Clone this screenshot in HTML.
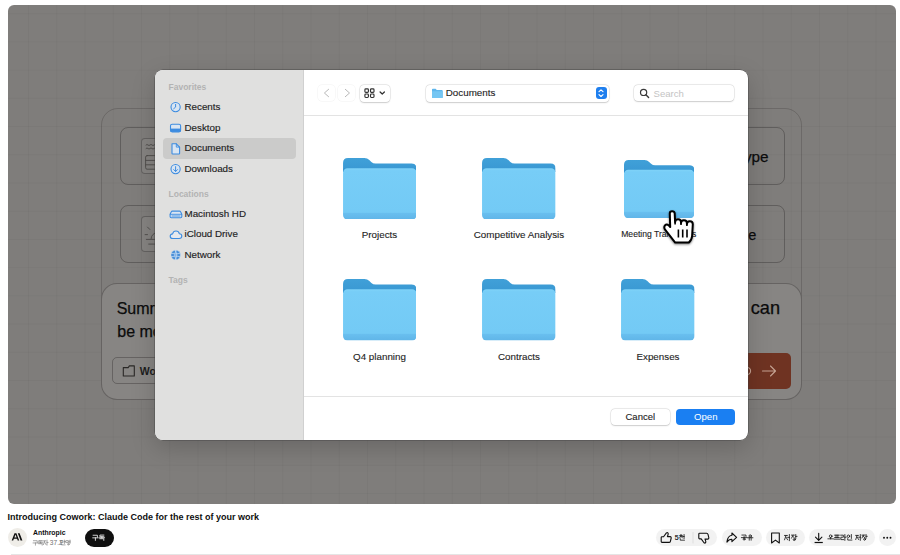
<!DOCTYPE html>
<html><head><meta charset="utf-8">
<style>
*{box-sizing:border-box;margin:0;padding:0}
html,body{width:900px;height:555px;overflow:hidden;background:#fff;font-family:"Liberation Sans",sans-serif}
.a{position:absolute}
#video{left:8px;top:5px;width:888px;height:499px;border-radius:6px;overflow:hidden;background:#7f7d7b}
.grid{left:0;top:0;width:888px;height:499px;
 background-image:linear-gradient(to right, rgba(0,0,0,0.03) 1px, transparent 1px),linear-gradient(to bottom, rgba(0,0,0,0.03) 1px, transparent 1px);
 background-size:28.25px 28.22px;background-position:20px 8.2px}
.bl{border:1px solid rgba(40,38,36,0.35)}
.t{white-space:nowrap;color:#222}
#dlg{left:147px;top:64.5px;width:593px;height:370px;border-radius:8px;overflow:hidden;background:#fff;box-shadow:0 0 0 0.5px rgba(0,0,0,0.55),0 0 0 1px rgba(255,255,255,0.12),0 8px 24px rgba(0,0,0,0.18)}
#side{left:0;top:0;width:149px;height:370px;background:#e0e0df;border-right:0.5px solid #d0d0d0}
.sh{font-size:8.5px;font-weight:700;color:#b3b3b3}
.si{font-size:9.8px;color:#1e1e1e;-webkit-text-stroke:0.15px #1e1e1e}
.btn{background:#fff;border-radius:4px;box-shadow:0 0 0 0.5px rgba(0,0,0,0.12),0 0.5px 1.5px rgba(0,0,0,0.15)}
.fl{font-size:9.8px;color:#1e1e1e;-webkit-text-stroke:0.12px #1e1e1e;text-align:center;white-space:nowrap}
.pill{background:#f2f2f2;border-radius:9px;height:17px;top:529px}
.kt{font-size:6.5px;color:#0f0f0f;font-weight:700;white-space:nowrap}
</style></head><body>
<svg width="0" height="0" style="position:absolute">
<defs>
<linearGradient id="fg" x1="0" y1="0" x2="0" y2="1">
<stop offset="0" stop-color="#80d3f8"/><stop offset="0.05" stop-color="#77cdf7"/><stop offset="0.86" stop-color="#73caf5"/><stop offset="0.87" stop-color="#69bfef"/><stop offset="1" stop-color="#60b5e8"/>
</linearGradient>
<linearGradient id="bg" x1="0" y1="0" x2="0" y2="1">
<stop offset="0" stop-color="#40a0d8"/><stop offset="0.7" stop-color="#3b9ad4"/><stop offset="1" stop-color="#2687c6"/>
</linearGradient>
<symbol id="folder" viewBox="0 0 74 62">
<path d="M0,5 Q0,0 5,0 H21.5 Q24.5,0 26.5,2 L28.5,4 Q30.2,5.6 32.8,5.6 H69 Q74,5.6 74,10.5 V14 H0 Z" fill="url(#bg)"/>
<rect x="0" y="10.3" width="74" height="51.7" rx="4.5" fill="url(#fg)"/>
</symbol>
</defs></svg>
<div id="video" class="a">
  <div class="a grid"></div>
  <!-- background app -->
  <div class="a" style="left:93.3px;top:102.6px;width:701.1px;height:240px;border-radius:17px;border:1px solid rgba(40,38,36,0.22)"></div>
  <div class="a bl" style="left:112px;top:122px;width:664.7px;height:58px;border-radius:8px"></div>
  <div class="a bl" style="left:112px;top:200px;width:664.7px;height:58px;border-radius:8px"></div>
  <div class="a bl" style="left:132.9px;top:133.3px;width:36px;height:35.3px;border-radius:4px;background:#858381"></div>
  <div class="a bl" style="left:132.9px;top:211.3px;width:36px;height:35.9px;border-radius:4px;background:#858381"></div>
  <svg class="a" style="left:132px;top:133px" width="20" height="120" fill="none" stroke="#4e4c4a" stroke-width="0.9" stroke-linecap="round">
    <path d="M6,7 q1,-1.1 2,0 t2,0 t2,0 t2,0 t2,0 M6,10.5 q1,-1.1 2,0 t2,0 t2,0 t2,0 t2,0"/>
    <rect x="5.6" y="17.6" width="14" height="13.6" rx="1.5"/>
    <path d="M5.6,22.4 H19 M5.6,26.8 H19"/>
    <path d="M7.5,89.1 L9.9,91.5 M5.1,96.6 H7.5 M6.3,101.4 H20 M8.7,106.1 H20"/>
    <path d="M11.1,100.6 A6,6 0 0 1 17.1,94.6"/>
  </svg>
  <div class="a bl" style="left:92.8px;top:278.4px;width:701.6px;height:116.6px;border-radius:16px;background:#878583"></div>
  <div class="a t" style="left:108.7px;top:296px;font-size:16px;line-height:16px;color:#0c0c0c;-webkit-text-stroke:0.25px #0c0c0c">Summarize my notes</div>
  <div class="a t" style="left:109.3px;top:318.5px;font-size:16px;line-height:16px;color:#0c0c0c;-webkit-text-stroke:0.25px #0c0c0c">be more useful</div>
  <div class="a t" style="right:116px;top:294.6px;font-size:18.2px;line-height:16px;color:#0c0c0c;-webkit-text-stroke:0.25px #0c0c0c">so you can</div>
  <div class="a bl" style="left:104.3px;top:351.6px;width:100px;height:27.4px;border-radius:5px"></div>
  <svg class="a" style="left:112px;top:358.6px" width="16" height="14" fill="none" stroke="#2a2826" stroke-width="1.1" stroke-linejoin="round">
    <path d="M3.3,3.6 H8.2 L9.4,1.9 H14.3 V12 H3.3 Z"/>
  </svg>
  <div class="a t" style="left:131.8px;top:361.3px;font-size:10.5px;line-height:10.5px;font-weight:700;color:#1c1c1c">Work in a folder</div>
  <div class="a" style="left:713px;top:348.1px;width:70px;height:36.1px;border-radius:5px;background:#6f3322"></div>
  <svg class="a" style="left:735px;top:358px" width="40" height="18" fill="none" stroke="#c5a292" stroke-width="1.1" stroke-linecap="round" stroke-linejoin="round">
    <circle cx="4" cy="8" r="3.6"/>
    <path d="M19.5,8 H32.5 M27.5,3 L32.5,8 L27.5,13"/>
  </svg>
  <div class="a t" style="right:127.4px;top:144.3px;font-size:15.3px;line-height:15.3px;color:#0c0c0c;-webkit-text-stroke:0.25px #0c0c0c">Create a prototype</div>
  <div class="a t" style="right:139.6px;top:223.3px;font-size:14.5px;line-height:14.5px;color:#0c0c0c;-webkit-text-stroke:0.25px #0c0c0c">Organize a file</div>

  <!-- dialog -->
  <div id="dlg" class="a">
    <div id="side" class="a">
      <div class="a sh" style="left:13.5px;top:12.8px">Favorites</div>
      <div class="a" style="left:7.5px;top:68.5px;width:133px;height:20.5px;border-radius:4px;background:#cbcbca"></div>
      <svg class="a" style="left:0;top:0" width="149" height="370" fill="none" stroke="#3d8ce0" stroke-width="1.1" stroke-linecap="round" stroke-linejoin="round">
        <circle cx="20.6" cy="37.1" r="4.6" fill="#d9e5f2"/>
        <path d="M20.6,34.4 V37.1 L18.7,38.7" stroke-width="1"/>
        <rect x="15.5" y="54.2" width="10.1" height="7.7" rx="1.6" fill="#d9e5f2"/>
        <rect x="15.5" y="58.6" width="10.1" height="3.3" fill="#3d8ce0" stroke="none"/>
        <path d="M17,73.8 H21.3 L24.6,77.1 V83.4 Q24.6,84 24,84 H17.6 Q17,84 17,83.4 Z" fill="#d9e5f2"/>
        <path d="M21.3,73.8 V77.1 H24.6" stroke-width="0.9"/>
        <circle cx="20.6" cy="99.1" r="4.6" fill="#d9e5f2"/>
        <path d="M20.6,96.6 V101.4 M18.7,99.6 L20.6,101.5 L22.5,99.6" stroke-width="1"/>
        <path d="M17.4,141.1 H24.5 Q25.3,141.1 25.6,141.8 L26.8,144.3 V146.6 Q26.8,147.7 25.7,147.7 H16.2 Q15.1,147.7 15.1,146.6 V144.3 L16.3,141.8 Q16.6,141.1 17.4,141.1 Z" fill="#d9e5f2"/>
        <path d="M15.3,144.3 H26.6 M17,146 H25" stroke-width="0.9"/>
        <path d="M17.8,168.5 H24.2 Q26.8,168.5 26.8,166.1 Q26.8,163.9 24.4,163.8 Q23.7,161 21,161 Q18.2,161 17.6,163.9 Q15.2,164.2 15.2,166.2 Q15.2,168.5 17.8,168.5 Z" fill="#e6e9ee"/>
        <circle cx="20.75" cy="185" r="4.8" fill="#4a8fd8" stroke="#cfe0f2" stroke-width="0.4"/>
        <path d="M16.3,183.3 Q20.7,184.8 25.2,183.3 M16.3,186.7 Q20.7,185.2 25.2,186.7 M20.75,180.4 Q18.5,185 20.75,189.6 M20.75,180.4 Q23,185 20.75,189.6" stroke="#cfe2f7" stroke-width="0.7"/>
      </svg>
      <div class="a si" style="left:29.5px;top:31.1px">Recents</div>
      <div class="a si" style="left:29.5px;top:52.1px">Desktop</div>
      <div class="a si" style="left:29.5px;top:72.8px">Documents</div>
      <div class="a si" style="left:29.5px;top:93.3px">Downloads</div>
      <div class="a sh" style="left:13.5px;top:119.4px">Locations</div>
      <div class="a si" style="left:29.5px;top:138px">Macintosh HD</div>
      <div class="a si" style="left:29.5px;top:158.7px">iCloud Drive</div>
      <div class="a si" style="left:29.5px;top:179.7px">Network</div>
      <div class="a sh" style="left:13.5px;top:205.3px">Tags</div>
    </div>
    <div class="a" style="left:149px;top:45px;width:444px;height:0.5px;background:#e3e3e3"></div>
    <div class="a" style="left:149px;top:326.5px;width:444px;height:0.5px;background:#e3e3e3"></div>
    <!-- toolbar -->
    <div class="a btn" style="left:163px;top:15px;width:17px;height:16.5px;box-shadow:0 0 0 0.5px rgba(0,0,0,0.06)"></div>
    <div class="a btn" style="left:183px;top:15px;width:17px;height:16.5px;box-shadow:0 0 0 0.5px rgba(0,0,0,0.06)"></div>
    <div class="a btn" style="left:204.5px;top:15.5px;width:30.5px;height:16.5px"></div>
    <div class="a btn" style="left:271px;top:15px;width:183px;height:17px"></div>
    <div class="a" style="left:440.5px;top:17.5px;width:11px;height:11.5px;border-radius:3px;background:#1f7fee"></div>
    <div class="a t" style="left:290.8px;top:17.9px;font-size:9.8px;color:#1e1e1e;-webkit-text-stroke:0.12px #1e1e1e">Documents</div>
    <div class="a btn" style="left:478.5px;top:15px;width:100px;height:16.5px"></div>
    <div class="a t" style="left:498.5px;top:18px;font-size:9.6px;color:#c4c4c4">Search</div>
    <svg class="a" style="left:0;top:0" width="593" height="60" fill="none" stroke-linecap="round" stroke-linejoin="round">
      <path d="M173.6,19.3 L169.4,23 L173.6,26.7" stroke="#b9b9b9" stroke-width="1"/>
      <path d="M190.3,19.3 L194.5,23 L190.3,26.7" stroke="#b9b9b9" stroke-width="1"/>
      <g stroke="#333" stroke-width="1.15">
        <rect x="209.9" y="18.9" width="3.5" height="3.5" rx="0.9"/>
        <rect x="215.5" y="18.9" width="3.5" height="3.5" rx="0.9"/>
        <rect x="209.9" y="24" width="3.5" height="3.5" rx="0.9"/>
        <rect x="215.5" y="24" width="3.5" height="3.5" rx="0.9"/>
        <path d="M225.1,22 L227.25,24 L229.4,22" stroke-width="1.25"/>
      </g>
      <path d="M277,19.6 Q277,18.7 277.9,18.7 H280.6 L281.8,19.9 H286.8 Q287.7,19.9 287.7,20.8 V27.2 Q287.7,28.1 286.8,28.1 H277.9 Q277,28.1 277,27.2 Z" fill="#5fb6ec" stroke="none"/>
      <path d="M277,21.2 H287.7 V27.2 Q287.7,28.1 286.8,28.1 H277.9 Q277,28.1 277,27.2 Z" fill="#75c6f3" stroke="none"/>
      <path d="M444,21.7 L446,19.8 L448,21.7 M444,24.6 L446,26.5 L448,24.6" stroke="#fff" stroke-width="1.15"/>
      <circle cx="488.6" cy="22.4" r="3.1" stroke="#3a3a3a" stroke-width="1.2"/>
      <path d="M490.9,24.7 L493.6,27.4" stroke="#3a3a3a" stroke-width="1.4"/>
    </svg>
    <!-- folders -->
    <svg class="a" style="left:187.7px;top:88.2px" width="73.6" height="61.6"><use href="#folder"/></svg>
    <svg class="a" style="left:327.2px;top:88.2px" width="73.6" height="61.6"><use href="#folder"/></svg>
    <svg class="a" style="left:468.5px;top:90.2px" width="70.3" height="58.2" viewBox="0 0 74 62" preserveAspectRatio="none"><use href="#folder"/></svg>
    <svg class="a" style="left:187.7px;top:209.9px" width="73.6" height="61.6"><use href="#folder"/></svg>
    <svg class="a" style="left:327.2px;top:209.9px" width="73.6" height="61.6"><use href="#folder"/></svg>
    <svg class="a" style="left:466.2px;top:209.9px" width="73.6" height="61.6"><use href="#folder"/></svg>
    <div class="a fl" style="left:174.5px;top:159.4px;width:100px">Projects</div>
    <div class="a fl" style="left:314px;top:159.4px;width:100px">Competitive Analysis</div>
    <div class="a fl" style="left:453.7px;top:159.3px;width:100px;font-size:8.6px">Meeting Transcripts</div>
    <div class="a fl" style="left:174.5px;top:281.2px;width:100px">Q4 planning</div>
    <div class="a fl" style="left:314px;top:281.2px;width:100px">Contracts</div>
    <div class="a fl" style="left:453px;top:281.2px;width:100px">Expenses</div>
    <!-- buttons -->
    <div class="a btn" style="left:456px;top:339.2px;width:58.8px;height:16.6px"></div>
    <div class="a t" style="left:470.5px;top:341.8px;font-size:9.5px;color:#1e1e1e;-webkit-text-stroke:0.12px #1e1e1e">Cancel</div>
    <div class="a" style="left:521px;top:339px;width:59px;height:16.5px;border-radius:4px;background:#1a7ff2"></div>
    <div class="a t" style="left:539px;top:341.5px;font-size:9.6px;color:#fff">Open</div>
  </div>
</div>

<!-- youtube info -->
<div class="a t" style="left:7.5px;top:511.7px;font-size:9px;font-weight:700;color:#0f0f0f">Introducing Cowork: Claude Code for the rest of your work</div>
<div class="a" style="left:8px;top:527.5px;width:19px;height:19px;border-radius:50%;background:#efede8"></div>
<div class="a t" style="left:33px;top:528.8px;font-size:6.9px;font-weight:700;color:#0f0f0f">Anthropic</div>
<svg class="a" style="left:0;top:0" width="900" height="555"><g fill="none" stroke="#707070" stroke-width="1.224" stroke-linecap="square"><g transform="translate(33.00,540.20) scale(0.4900)"><path d="M1,1 H8.6 V4.2 M0.3,5.6 H9.7 M5,5.6 V10"/></g><g transform="translate(38.10,540.20) scale(0.4900)"><path d="M8.4,0.7 H1.4 V3.6 H8.4 M5,3.8 V5.5 M0.3,5.5 H9.7 M1.4,7.2 H8.4 V10"/></g><g transform="translate(43.20,540.20) scale(0.4900)"><path d="M0.6,1.4 H5.2 M3,1.6 L0.6,8.8 M3,4.2 L5.6,8.8 M7.8,0 V10 M7.8,4.6 H9.8"/></g></g><g fill="none" stroke="#707070" stroke-width="1.224" stroke-linecap="square"><g transform="translate(60.60,540.20) scale(0.4900)"><path d="M0.8,0.8 H5 V5 H0.8 Z M7.8,0 V6.6 M7.8,3 H9.8 M1.8,7.2 V9.6 H9"/></g><g transform="translate(65.90,540.20) scale(0.4900)"><path d="M0.8,0.8 H4.6 V4.8 H0.8 Z M8.4,0 V6.2 M5.6,1.8 H8.4 M5.6,4 H8.4"/><circle cx="5.0" cy="8.3" r="1.6"/></g></g></svg><div class="a t" style="left:49.8px;top:539.3px;font-size:6.6px;line-height:7px;color:#707070">37.2</div>
<div class="a" style="left:85px;top:529px;width:28.5px;height:17.5px;border-radius:9px;background:#0f0f0f"></div>
<div class="a pill" style="left:656px;width:61px"></div>
<div class="a pill" style="left:722px;width:39.5px"></div>
<div class="a pill" style="left:765.5px;width:39px"></div>
<div class="a pill" style="left:809px;width:65.5px"></div>
<div class="a pill" style="left:879px;width:16.5px;border-radius:50%;height:16.5px"></div>
<div class="a" style="left:11px;top:553.5px;width:889px;height:1px;background:#e5e5e5"></div>
<svg class="a" style="left:0;top:500px" width="900" height="55" fill="none" stroke="#0f0f0f" stroke-linejoin="round" stroke-linecap="round">
  <path d="M14.5,33.2 H16.4 L19.2,40.4 H17.7 L17.1,38.7 H13.9 L13.2,40.4 H11.7 Z M14.4,37.5 H16.6 L15.5,34.6 Z" fill="#0f0f0f" stroke="none" fill-rule="evenodd"/>
  <path d="M17.8,33.2 H19.6 L22.4,40.4 H20.6 Z" fill="#0f0f0f" stroke="none"/>
  <path d="M661.2,37.6 Q661.2,36.8 662,36.8 H663.6 L666.4,32.9 Q667.4,32.2 668,33 Q668.4,33.6 668.1,34.5 L667.4,36.6 H670.3 Q671.4,36.8 671.2,38 L670.4,41.3 Q670.1,42.4 669,42.4 H662 Q661.2,42.4 661.2,41.6 Z" stroke-width="1.1"/>
  <path d="M693,32.5 V43" stroke="#d0d0d0" stroke-width="0.6"/>
  <path d="M 698.80,38.10 Q 698.80,38.90 699.60,38.90 H 701.20 L 704.00,42.80 Q 705.00,43.50 705.60,42.70 Q 706.00,42.10 705.70,41.20 L 705.00,39.10 H 707.90 Q 709.00,38.90 708.80,37.70 L 708.00,34.40 Q 707.70,33.30 706.60,33.30 H 699.60 Q 698.80,33.30 698.80,34.10 Z" stroke-width="1.1"/>
  <path d="M731.9,33 L736.6,37.3 L731.9,41.6 V39.3 Q728.6,39.2 726.9,42.1 Q727.6,35.9 731.9,35.3 Z" stroke-width="1.1"/>
  <path d="M771.6,33 H779.3 V43 L775.45,40.1 L771.6,43 Z" stroke-width="1.1"/>
  <path d="M818.7,33.2 V40.3 M815.5,37.1 L818.7,40.3 L821.9,37.1" stroke-width="1.1"/><path d="M814.6,42.5 H822.8" stroke-width="1.2" stroke-linecap="butt"/>
  <circle cx="884" cy="37.7" r="0.95" fill="#0f0f0f" stroke="none"/>
  <circle cx="887.25" cy="37.7" r="0.95" fill="#0f0f0f" stroke="none"/>
  <circle cx="890.5" cy="37.7" r="0.95" fill="#0f0f0f" stroke="none"/>
</svg>
<svg class="a" style="left:0;top:0" width="900" height="555"><g fill="none" stroke="#fff" stroke-width="1.429" stroke-linecap="square"><g transform="translate(92.60,534.70) scale(0.5600)"><path d="M1,1 H8.6 V4.2 M0.3,5.6 H9.7 M5,5.6 V10"/></g><g transform="translate(99.10,534.70) scale(0.5600)"><path d="M8.4,0.7 H1.4 V3.6 H8.4 M5,3.8 V5.5 M0.3,5.5 H9.7 M1.4,7.2 H8.4 V10"/></g></g></svg>
<div class="a t" style="left:674.7px;top:533.5px;font-size:7px;line-height:8px;color:#0f0f0f;-webkit-text-stroke:0.2px #0f0f0f">5</div><svg class="a" style="left:0;top:0" width="900" height="555"><g fill="none" stroke="#0f0f0f" stroke-width="1.379" stroke-linecap="square"><g transform="translate(679.20,534.60) scale(0.5800)"><path d="M2.2,0.6 H4.2 M0.6,2 H5.6 M3.1,2.2 L0.8,5.6 M3.1,2.4 L5.4,5.6 M8.4,0 V6.6 M6,3.3 H8.4 M1.8,7.2 V9.6 H9"/></g></g></svg>
<svg class="a" style="left:0;top:0" width="900" height="555"><g fill="none" stroke="#0f0f0f" stroke-width="1.429" stroke-linecap="square"><g transform="translate(741.30,534.60) scale(0.5600)"><path d="M1.2,0.8 H8.4 V3.2 M5,3.6 V5.4 M0.3,5.4 H9.7"/><circle cx="5.0" cy="8.1" r="1.7"/></g><g transform="translate(747.40,534.60) scale(0.5600)"><path d="M0.3,5.6 H9.7 M3.3,5.6 V9.8 M6.7,5.6 V9.8"/><circle cx="5.0" cy="2.5" r="2.1"/></g></g><g fill="none" stroke="#0f0f0f" stroke-width="1.333" stroke-linecap="square"><g transform="translate(784.20,534.60) scale(0.6000)"><path d="M0.6,1.4 H5.2 M3,1.6 L0.6,8.6 M3,4.2 L5.6,8.6 M8.6,0 V10 M5.8,4.6 H8.6"/></g><g transform="translate(791.20,534.60) scale(0.6000)"><path d="M0.6,0.9 H5.2 M3,1.1 L0.6,5.8 M3,2.9 L5.4,5.8 M7.6,0 V6.4 M7.6,3 H9.6"/><circle cx="5.0" cy="8.3" r="1.6"/></g></g><g fill="none" stroke="#0f0f0f" stroke-width="1.404" stroke-linecap="square"><g transform="translate(827.80,534.60) scale(0.5700)"><path d="M5,5.1 V7.4 M0.3,7.4 H9.7"/><circle cx="5.0" cy="2.8" r="2.3"/></g><g transform="translate(834.10,534.60) scale(0.5700)"><path d="M1,1 H9 M3.4,1 V5.2 M6.6,1 V5.2 M1,5.2 H9 M0.3,8 H9.7"/></g><g transform="translate(840.40,534.60) scale(0.5700)"><path d="M0.6,1 H5.2 V4.6 H0.8 V8.8 H5.6 M7.8,0 V10 M7.8,4.6 H9.8"/></g><g transform="translate(846.70,534.60) scale(0.5700)"><path d="M8.2,0 V6.6 M1.8,7.2 V9.6 H9"/><circle cx="3.0" cy="2.9" r="2.2"/></g><g transform="translate(855.40,534.60) scale(0.5700)"><path d="M0.6,1.4 H5.2 M3,1.6 L0.6,8.6 M3,4.2 L5.6,8.6 M8.6,0 V10 M5.8,4.6 H8.6"/></g><g transform="translate(861.70,534.60) scale(0.5700)"><path d="M0.6,0.9 H5.2 M3,1.1 L0.6,5.8 M3,2.9 L5.4,5.8 M7.6,0 V6.4 M7.6,3 H9.6"/><circle cx="5.0" cy="8.3" r="1.6"/></g></g></svg>


<svg class="a" style="left:660px;top:206px;filter:drop-shadow(0.8px 1.8px 1.2px rgba(0,0,0,0.5))" width="42" height="42" viewBox="0 0 42 42">
  <path d="M15.2,36.6 L4.9,23.4 Q3.6,21.2 5,19.4 Q6.6,17.6 8.8,19.4 L10.2,21 L9.8,7.4 Q9.8,5.2 12.1,5.2 Q14.5,5.2 14.7,7.4 L15.1,16.3 A2.95,2.95 0 0 1 21,16.3 V17.1 A2.95,2.95 0 0 1 26.9,17.1 V18.2 A2.95,2.95 0 0 1 32.8,18.2 L32.1,30 Q31.7,34.4 28.7,36.6 Z" fill="#fff" stroke="#000" stroke-width="2" stroke-linejoin="round"/>
  <path d="M15.1,16.3 V18.4 M21,17.1 V19 M26.9,18.2 V20 M18.4,23.6 V31.4 M22.7,23.6 V31.4 M27,23.6 V31.4" stroke="#000" stroke-width="1.6" stroke-linecap="butt"/>
</svg>
</body></html>
